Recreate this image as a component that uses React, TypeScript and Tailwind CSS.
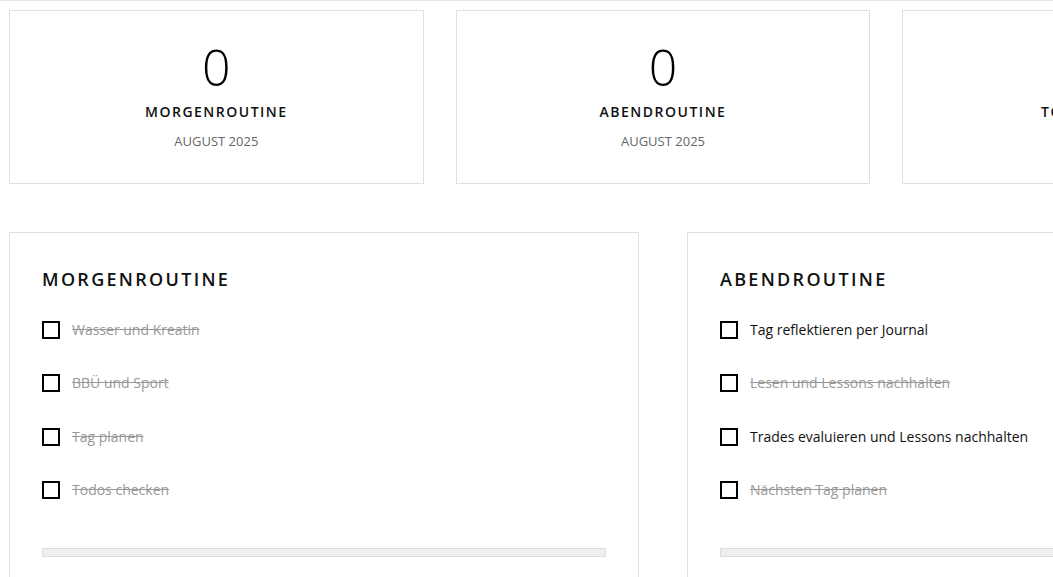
const stats = [
  { value: 0, label: "Morgenroutine", sub: "August 2025" },
  { value: 0, label: "Abendroutine", sub: "August 2025" },
  { value: 0, label: "Todos erledigt", sub: "August 2025" },
];

const routines = [
  {
    title: "Morgenroutine",
    items: [
      { text: "Wasser und Kreatin", done: true },
      { text: "BBÜ und Sport", done: true },
      { text: "Tag planen", done: true },
      { text: "Todos checken", done: true },
    ],
  },
  {
    title: "Abendroutine",
    items: [
      { text: "Tag reflektieren per Journal", done: false },
      { text: "Lesen und Lessons nachhalten", done: true },
      { text: "Trades evaluieren und Lessons nachhalten", done: false },
      { text: "Nächsten Tag planen", done: true },
    ],
  },
];

function StatCard({ value, label, sub }: { value: number; label: string; sub: string }) {
  return (
    <div className="h-[174px] border border-[#e0e0e0] bg-white flex flex-col items-center pt-[28px]">
      <div className="text-[50px] leading-[56px] font-light text-black">{value}</div>
      <div className="mt-[7px] text-[14px] leading-[20px] font-semibold uppercase tracking-[1.5px] text-[#111]">
        {label}
      </div>
      <div className="mt-[9px] text-[13px] leading-[20px] uppercase text-[#666]">{sub}</div>
    </div>
  );
}

function RoutineCard({ title, items }: { title: string; items: { text: string; done: boolean }[] }) {
  return (
    <div className="border border-[#e0e0e0] bg-white px-8 pt-[33px] pb-8">
      <h2 className="text-[18px] leading-[27px] font-semibold uppercase tracking-[2.3px] text-[#111]">{title}</h2>
      <ul className="mt-[26px] flex flex-col gap-[31.4px]">
        {items.map((item) => (
          <li key={item.text} className="flex items-center gap-3 h-[22px]">
            <span className="w-[18px] h-[18px] border-2 border-black shrink-0" />
            <span
              className={
                item.done
                  ? "text-[14px] leading-[22px] text-[#999] line-through"
                  : "text-[14px] leading-[22px] text-[#111]"
              }
            >
              {item.text}
            </span>
          </li>
        ))}
      </ul>
      <div className="mt-[47px] h-[9px] border border-[#dcdcdc] bg-[#efefef]" />
    </div>
  );
}

export default function App() {
  return (
    <div
      className="w-[1053px] h-[577px] overflow-hidden bg-white border-t border-[#e3e3e3]"
      style={{ fontFamily: '"Open Sans", "Noto Sans", sans-serif' }}
    >
      <div className="w-[1317px] pl-[9px] pt-[9px]">
        <div className="grid grid-cols-3 gap-8">
          {stats.map((s) => (
            <StatCard key={s.label} {...s} />
          ))}
        </div>
        <div className="mt-[48px] grid grid-cols-2 gap-[48px]">
          {routines.map((r) => (
            <RoutineCard key={r.title} {...r} />
          ))}
        </div>
      </div>
    </div>
  );
}
